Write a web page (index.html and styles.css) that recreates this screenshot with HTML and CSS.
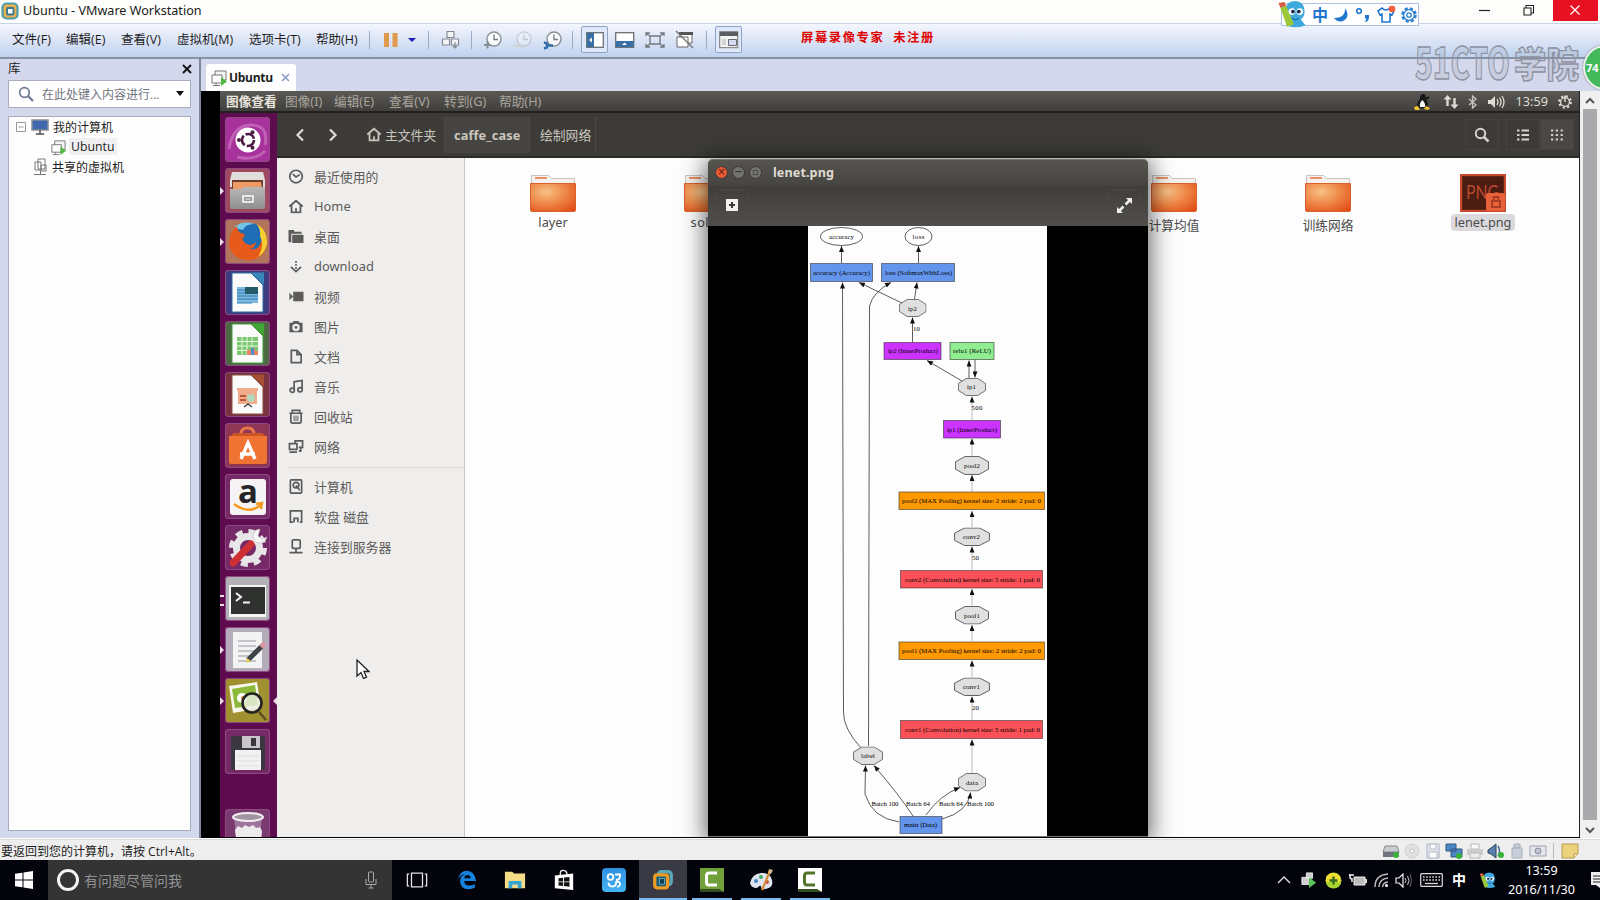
FILE: index.html
```html
<!DOCTYPE html>
<html lang="zh-CN">
<head>
<meta charset="utf-8">
<title>Ubuntu - VMware Workstation</title>
<link rel="stylesheet" href="styles.css">
</head>
<body>
<svg class="defs" width="0" height="0">
  <defs>
    <radialGradient id="folderfill" cx=".35" cy=".3" r=".9"><stop offset="0" stop-color="#f6c184"/><stop offset=".5" stop-color="#ee8445"/><stop offset="1" stop-color="#e04a14"/></radialGradient>
    <linearGradient id="grey" x1="0" y1="0" x2="0" y2="1"><stop offset="0" stop-color="#b9b7b5"/><stop offset="1" stop-color="#8f8f8f"/></linearGradient>
    <linearGradient id="blue" x1="0" y1="0" x2="0" y2="1"><stop offset="0" stop-color="#2f8fe0"/><stop offset="1" stop-color="#45b4f4"/></linearGradient>
    <marker id="ah" viewBox="0 0 6 5" refX="6" refY="2.5" markerWidth="6.5" markerHeight="5" markerUnits="userSpaceOnUse" orient="auto"><path d="M0 0L6 2.5L0 5z" fill="#111"/></marker>
  </defs>
  <symbol id="folder" viewBox="0 0 46 38"><path d="M1.500 10V1.500h17l3 3h23V10z" fill="#f4f1ef" stroke="#c9c2bd"/><path d="M5 4h12" stroke="#e8793f" stroke-width="1.600"/><path d="M.5 9.500h45V36q0 1.500-1.500 1.500H2Q.5 37.500.5 36z" fill="url(#folderfill)" stroke="#d9622c"/></symbol>
  <symbol id="vm" viewBox="0 0 18 18"><path d="M5 2h11v9H5z" fill="#f4f4f4" stroke="#777"/><path d="M2 6h10v8H2z" fill="#fff" stroke="#777"/><path d="M3 16.500h7M6 14v2" stroke="#777"/><path d="M11 8l6 4.500-6 4.500z" fill="#4fba3f"/></symbol>
  <symbol id="clock" viewBox="0 0 20 20"><circle cx="11" cy="9" r="7" fill="#fafbfc" stroke="#8b9095" stroke-width="1.400"/><path d="M11 4.500V9.500h4" fill="none" stroke="#74797e" stroke-width="1.300"/></symbol>
  <symbol id="oct" viewBox="0 0 34 18" preserveAspectRatio="none"><path d="M10 .5h14l9.500 5v7l-9.500 5H10l-9.500-5v-7z" fill="#e0e0e0" stroke="#444" stroke-width=".8"/></symbol>
  <symbol id="house" viewBox="0 0 18 16"><path d="M1.500 8L9 1.500 16.500 8M4 7v7.500h10V7M9 14v-4" fill="none" stroke="currentColor" stroke-width="2"/></symbol>
  <symbol id="vmware" viewBox="0 0 24 24"><rect x="7" y="3" width="14" height="14" rx="3" fill="none" stroke="#5ba9b8" stroke-width="3.600"/><rect x="3" y="6.500" width="14" height="14" rx="2.500" fill="#165d79" stroke="#ec9b25" stroke-width="3.600"/><rect x="8" y="10.500" width="5.500" height="6" fill="#123f55" stroke="#7cc0c4" stroke-width=".8"/></symbol>
  <symbol id="camtasia" viewBox="0 0 24 24"><path d="M17 5H9Q6.500 5 6.500 8v6q0 3 2.500 3h8" fill="none" stroke="currentColor" stroke-width="3"/></symbol>
  <symbol id="mascot" viewBox="0 0 30 30"><path d="M8 12Q8 1 18 1t10 11q0 6-4 8l5 6q-9 4-18 1z" fill="#3ea9dd"/><path d="M3 8l6-2 8 19-7 3z" fill="#9bc83a"/><path d="M1 3l6-1 2 4-6 2z" fill="#d85b40"/><circle cx="15" cy="12" r="3.500" fill="#fff"/><circle cx="23" cy="12" r="3.500" fill="#fff"/><circle cx="16" cy="12" r="2" fill="#152b4e"/><circle cx="22" cy="12" r="2" fill="#152b4e"/><path d="M15 19q4 3 7 0" stroke="#0f558a" fill="none"/></symbol>
</svg>

<header class="titlebar">
  <svg class="app-icon" width="18" height="18" viewBox="0 0 18 18"><rect x="1.500" y="1.500" width="15" height="15" rx="4" fill="#eab04e" stroke="#4d9dab" stroke-width="2.200"/><rect x="6" y="6" width="6.500" height="6.500" rx="1" fill="#fff" stroke="#36758c" stroke-width="1.800"/></svg>
  <span class="title">Ubuntu - VMware Workstation</span>
  <div class="ime">
    <svg class="ime-pet" width="30" height="29"><use href="#mascot"/></svg>
    <b>中</b>
    <svg width="18" height="18" viewBox="0 0 18 18"><path d="M13 2q1 10-11 10 4 5 9 3 8-4 2-13z" fill="#1f77cf"/></svg>
    <svg width="18" height="18" viewBox="0 0 18 18"><circle cx="5" cy="5" r="2.300" fill="none" stroke="#1f77cf" stroke-width="1.600"/><path d="M11 9h4v3q-1 4-4 4l1.500-3.500H11z" fill="#1f77cf"/></svg>
    <svg width="20" height="20" viewBox="0 0 20 20"><path d="M6 3q4 4 8 0l4 3-2 4-2-1v8H6V9l-2 1-2-4z" fill="#fff" stroke="#1f77cf" stroke-width="1.600"/><circle cx="16" cy="4" r="3.300" fill="#f0603c"/></svg>
    <svg width="18" height="18" viewBox="0 0 18 18"><circle cx="9" cy="9" r="6.500" fill="none" stroke="#2d82d2" stroke-width="2.600" stroke-dasharray="3.100 2"/><circle cx="9" cy="9" r="5.300" fill="#fff" stroke="#2d82d2" stroke-width="1.300"/><circle cx="9" cy="9" r="2.200" fill="none" stroke="#2d82d2" stroke-width="1.300"/></svg>
  </div>
  <div class="win-btns">
    <svg width="45" height="21" viewBox="0 0 45 21"><path d="M16 10.500h11" stroke="#222" stroke-width="1.200"/></svg>
    <svg width="45" height="21" viewBox="0 0 45 21"><path d="M16 8h7v7h-7zM18 8V5.500h7.500V13H23" fill="none" stroke="#222" stroke-width="1.100"/></svg>
    <svg class="close" width="45" height="21" viewBox="0 0 45 21"><path d="M17.500 5.500l9 9m0-9l-9 9" stroke="#fff" stroke-width="1.200"/></svg>
  </div>
</header>

<nav class="menubar">
  <span class="w54">文件(F)</span><span class="w55">编辑(E)</span><span class="w56">查看(V)</span><span class="w72">虚拟机(M)</span><span class="w67">选项卡(T)</span><span class="w53">帮助(H)</span>
  <i class="sep"></i>
  <svg class="t-pause" width="36" height="20" viewBox="0 0 36 20"><path d="M0 3h5v14H0zM8.500 3h5v14h-5z" fill="#e09a4c"/><path d="M24 8h8l-4 4z" fill="#1b1bb0"/></svg>
  <i class="sep"></i>
  <svg class="t-net" width="20" height="20" viewBox="0 0 20 20"><g fill="#f5f6f8" stroke="#868a90" stroke-width="1.200"><path d="M6 1.500h7v6H6zM1.500 9h7v6h-7zM10.500 9h7v6h-7z"/><path d="M14 12v6m-2-2l2 2 2-2" fill="none"/></g></svg>
  <i class="sep"></i>
  <div class="clocks">
    <svg width="20" height="20" viewBox="0 0 20 20"><use href="#clock"/><path d="M1 15h7M4.500 11.500v7" stroke="#84909a" stroke-width="2"/></svg>
    <svg class="faded" width="20" height="20" viewBox="0 0 20 20"><use href="#clock"/><path d="M1 16h8" stroke="#d6b080" stroke-width="2"/></svg>
    <svg width="20" height="20" viewBox="0 0 20 20"><use href="#clock"/><path d="M3 15.500h7M1 12.500l3 1v4l-3 1" stroke="#2f6ca8" stroke-width="2.400" fill="none"/></svg>
  </div>
  <i class="sep"></i>
  <div class="views">
    <span class="boxed"><svg width="18" height="16" viewBox="0 0 18 16"><rect x=".7" y=".7" width="16.600" height="14.600" fill="#fff" stroke="#6a6e74" stroke-width="1.300"/><path d="M1 1h7v14H1z" fill="#3a6fa5"/><path d="M6 5.500v5L3 8z" fill="#fff"/></svg></span>
    <svg width="20" height="16" viewBox="0 0 20 16"><rect x=".7" y=".7" width="18" height="14.600" fill="#fff" stroke="#6a6e74" stroke-width="1.300"/><path d="M1 9h17.500v6H1z" fill="#3a6fa5"/><path d="M7 13h5L9.500 10.500z" fill="#fff"/></svg>
    <svg width="20" height="18" viewBox="0 0 20 18"><path d="M5 5h10v8H5zM1 5V2h4M19 5V2h-4M1 13v3h4M19 13v3h-4M1.500 2.500L5 5M18.500 2.500L15 5M1.500 15.500L5 13M18.500 15.500L15 13" fill="none" stroke="#73777d" stroke-width="1.400"/></svg>
    <svg width="20" height="20" viewBox="0 0 20 20"><path d="M5 3h12v10H5z" fill="#fff" stroke="#666"/><path d="M4 2h14v3H4z" fill="#555"/><path d="M2 7h11v10H2z" fill="#fff" stroke="#666"/><path d="M1 1l17 17" stroke="#777" stroke-width="1.500"/></svg>
  </div>
  <i class="sep"></i>
  <span class="boxed last"><svg width="20" height="18" viewBox="0 0 20 18"><rect x=".7" y=".7" width="18" height="16" fill="#f2f2f2" stroke="#777"/><path d="M1 1h18v4H1z" fill="#5a5d62"/><path d="M3 8h4v6H3z" fill="#cfd3d8"/><path d="M9.500 8.500h8v6h-8z" fill="#d5daf0" stroke="#667"/></svg></span>
  <span class="redtext">屏幕录像专家&nbsp; 未注册</span>
</nav>

<main class="work">
  <aside class="library">
    <div class="lib-head"><span>库</span><svg width="10" height="10" viewBox="0 0 10 10"><path d="M1 1l8 8m0-8L1 9" stroke="#111" stroke-width="1.800"/></svg></div>
    <div class="lib-search">
      <svg width="16" height="16" viewBox="0 0 16 16"><circle cx="6.500" cy="6.500" r="4.800" fill="none" stroke="#6c7896" stroke-width="1.700"/><path d="M10 10l5 5" stroke="#6c7896" stroke-width="2.200"/></svg>
      <span>在此处键入内容进行...</span>
      <svg class="dd" width="8" height="5" viewBox="0 0 8 5"><path d="M0 0h8L4 5z" fill="#111"/></svg>
    </div>
    <div class="tree">
      <div class="row r1"><svg width="10" height="10" viewBox="0 0 10 10"><path d="M.5.5h9v9h-9zM2.500 5h5" fill="#fff" stroke="#999"/></svg><svg class="pc" width="18" height="16" viewBox="0 0 18 16"><path d="M1 1h16v10H1z" fill="#3d68ae" stroke="#8a8d92" stroke-width="1.500"/><path d="M9 11v3M5 15h8" stroke="#777" stroke-width="2"/></svg><span>我的计算机</span></div>
      <div class="row r2"><svg width="17" height="17"><use href="#vm"/></svg><span class="sel">Ubuntu</span></div>
      <div class="row r3"><svg width="15" height="18" viewBox="0 0 15 18"><path d="M5 1h7v10H5zM2 4h6v8H2zM8 7h5v6H8z" fill="#fff" stroke="#777"/><path d="M7.500 13v3M1 16.500h12" stroke="#777"/></svg><span>共享的虚拟机</span></div>
    </div>
  </aside>

  <section class="console">
    <div class="tabs"><div class="tab"><svg width="18" height="18"><use href="#vm"/></svg><b>Ubuntu</b><svg class="tx" width="9" height="9" viewBox="0 0 9 9"><path d="M1 1l7 7m0-7L1 8" stroke="#8aa0cc" stroke-width="1.700"/></svg></div></div>
    <div class="screen">
      <div class="guest">
        <div class="panel">
          <b class="p1">图像查看</b><span class="p2">图像(I)</span><span class="p3">编辑(E)</span><span class="p3">查看(V)</span><span class="p3">转到(G)</span><span>帮助(H)</span>
          <div class="indicators">
            <svg width="18" height="18" viewBox="0 0 18 18"><path d="M5 15Q3 10 7 6q0-5 3-5t3 5q3 4 1 9z" fill="#151515"/><path d="M7 14q-1-4 2.500-7Q13 11 12 14z" fill="#f4f4f4"/><path d="M1 14l4-1 2 4H2zM11 16l2-3 4 2-2 2z" fill="#f2c32f"/><path d="M13 6l3-2" stroke="#111" stroke-width="2"/></svg>
            <svg width="16" height="16" viewBox="0 0 16 16"><path d="M4.500 12V3M11.500 4v9" stroke="#dfdbd2" stroke-width="2.400"/><path d="M.5 5.500l4-4.500 4 4.500zM7.500 10.500l4 4.500 4-4.500z" fill="#dfdbd2"/></svg>
            <svg width="10" height="14" viewBox="0 0 10 14"><path d="M1 4l7 6-3.500 3V1L8 4l-7 6" fill="none" stroke="#c9c6be" stroke-width="1.300"/></svg>
            <svg width="18" height="14" viewBox="0 0 18 14"><path d="M1 5h3l4-4v12L4 9H1z" fill="#dfdbd2"/><path d="M10 4q2 3 0 6M12.500 2.500q3 4.500 0 9M15 1q4 6 0 12" fill="none" stroke="#dfdbd2" stroke-width="1.300"/></svg>
            <span>13:59</span>
            <svg width="14" height="14" viewBox="0 0 14 14"><circle cx="7" cy="7" r="5.600" fill="none" stroke="#dfdbd2" stroke-width="2.600" stroke-dasharray="2 2.400"/><circle cx="7" cy="7" r="4.400" fill="#4a4845" stroke="#dfdbd2" stroke-width="1.300"/><path d="M7 .5V7" stroke="#dfdbd2" stroke-width="1.500"/></svg>
          </div>
        </div>
        <div class="desk">
          <div class="launcher">
            <div class="tile dash"><svg viewBox="0 0 45 45"><path d="M4 32Q8 8 26 8T40 28M12 40Q30 44 40 34" fill="none" stroke="#d98fcf" stroke-width="3" opacity=".5"/><circle cx="23" cy="23" r="12.500" fill="#fff"/><circle cx="23" cy="23" r="6" fill="none" stroke="#4d1b45" stroke-width="2.600" stroke-dasharray="10.500 2"/><g fill="#4d1b45"><circle cx="14" cy="23" r="2"/><circle cx="27.500" cy="15.300" r="2"/><circle cx="27.500" cy="30.700" r="2"/></g></svg></div>
            <div class="tile files run"><svg viewBox="0 0 45 45"><path d="M7 4h31l2 8v7H5v-7z" fill="#e0dedb"/><path d="M7 12h31v9H7z" fill="#6d3b2b"/><path d="M8 14h28l1 7H8z" fill="#ee9b68"/><path d="M5 21h11l3-2h21v20q0 2-2 2H7q-2 0-2-2z" fill="url(#grey)"/><rect x="18" y="28" width="10" height="6" fill="#999" stroke="#fff" stroke-width="1.500"/><path d="M20.500 31h5" stroke="#eee"/></svg></div>
            <div class="tile fox run"><svg viewBox="0 0 45 45"><circle cx="24" cy="22" r="18" fill="#1e6db5"/><path d="M9 8q10-7 20-3-9 0-11 6-6-1-9-3z" fill="#74c4e6"/><path d="M5 18Q7 10 12 7q0 5 4 7 3 0 4 3-4 2-1 6 6 6 12 0-1 6-6 7 8 2 11-7 4-8-4-18Q43 12 42 25q-3 16-19 16Q6 40 4 25q0-4 1-7z" fill="#e65a1c"/><path d="M32 5q11 7 10 20-2 9-9 13 7-11 2-21 1-6-3-12z" fill="#f6cf32"/></svg></div>
            <div class="tile writer"><svg viewBox="0 0 45 45"><path d="M7 3h19l12 12v27H7z" fill="#fbfbfb" stroke="#2d6ea4"/><path d="M26 2.500h13V15z" fill="#3787bd"/><path d="M12 17h21v16H12z" fill="#7fb9df"/><path d="M12 20h8m-8 3h8m-8 3h21m-21 3h21m-21 4h15" stroke="#287ab0"/><path d="M20 17h13v7H20z" fill="#245b69"/></svg></div>
            <div class="tile calc"><svg viewBox="0 0 45 45"><path d="M7 3h19l12 12v27H7z" fill="#fbfbfb" stroke="#439b3c"/><path d="M26 2.500h13V15z" fill="#3fa834"/><path d="M12 16h21v18H12z" fill="#7cc870"/><path d="M12 20.500h21m-21 4.500h21m-21 4.500h12M17 16v18m5-18v18m5-18v10" stroke="#e6f8e0"/><path d="M22 34v-5h4v5zM27 34v-7h3v7zM30 34v-4h3v4z" fill="#ee8160"/><path d="M26 27h3v7h-3z" fill="#4a8ecb"/></svg></div>
            <div class="tile impress"><svg viewBox="0 0 45 45"><path d="M7 3h19l12 12v27H7z" fill="#fbfbfb" stroke="#8b4c40"/><path d="M26 2.500h13V15z" fill="#a44f33"/><path d="M12 16h21v3H12zM13 19h19v13H13z" fill="#efab8c"/><path d="M15 24h6m-6 4h6" stroke="#b8583b" stroke-width="2"/><circle cx="26" cy="26" r="4" fill="#b3d8bd"/><path d="M19 35l4-3 4 3" stroke="#444" stroke-width="1.500" fill="none"/></svg></div>
            <div class="tile soft"><svg viewBox="0 0 45 45"><path d="M16 11Q16 5 22.500 5T29 11" stroke="#e8784c" stroke-width="3" fill="none"/><path d="M4 14l5-4h28l5 4z" fill="#ce5426"/><path d="M4 13h38v26q0 2-2 2H6q-2 0-2-2z" fill="#ef7434"/><path d="M16 36l7-16 7 16M15 31h15" stroke="#fff" stroke-width="3.400" fill="none"/></svg></div>
            <div class="tile amazon"><svg viewBox="0 0 45 45"><rect x="5" y="5" width="36" height="36" rx="3" fill="#f6f3f5"/><text x="23" y="29" text-anchor="middle">a</text><path d="M9 30q14 11 27 1M31 30l6-1-1 6" fill="none" stroke="#f49a1d" stroke-width="2.400"/></svg></div>
            <div class="tile prefs"><svg viewBox="0 0 45 45"><circle cx="23" cy="23" r="16.500" fill="none" stroke="#e5e3e5" stroke-width="5" stroke-dasharray="7 5.960"/><circle cx="23" cy="23" r="11.500" fill="none" stroke="#e8e6e8" stroke-width="7"/><path d="M26 19l5-5" stroke="#f1f1f1" stroke-width="5"/><path d="M35 4q-7 1-7 7t6 7q6 0 8-6l-5 2-4-3z" fill="#f6f6f6" stroke="#bbb" stroke-width=".6"/><path d="M8 38l18-19" stroke="#cf2f32" stroke-width="7" stroke-linecap="round"/></svg></div>
            <div class="tile term run2"><svg viewBox="0 0 45 45"><rect x="4" y="9" width="37" height="32" fill="#f4f4f4"/><rect x="6" y="11" width="34" height="27" fill="#303230"/><path d="M11 17l5 4-5 4M18 26.500h7" stroke="#f2f2f2" stroke-width="2" fill="none"/></svg></div>
            <div class="tile gedit run"><svg viewBox="0 0 45 45"><path d="M8 5h29v36H8z" fill="#f3f3f4"/><path d="M13 14h18m-18 5h18m-18 5h18m-18 5h12m-12 5h18" stroke="#b5b7ba" stroke-width="1.500"/><path d="M23 33l14-14" stroke="#3e4348" stroke-width="5"/><path d="M36 20l4-4" stroke="#d795a0" stroke-width="5"/><path d="M21 36l1-5 4 3z" fill="#e9ce52"/></svg></div>
            <div class="tile eog run active"><svg viewBox="0 0 45 45"><path d="M4 8l28-4 4 26-28 5z" fill="#f7f6ec"/><path d="M7 11l23-4 3 20-23 3z" fill="#8dba3a"/><circle cx="17" cy="20" r="5" fill="#fff"/><circle cx="18" cy="20" r="2" fill="#e88923"/><circle cx="27" cy="25" r="9.500" fill="#ecefe3" fill-opacity=".8" stroke="#222" stroke-width="2.600"/><path d="M34 34l7 8" stroke="#5d4d20" stroke-width="2.600"/></svg></div>
            <div class="tile floppy"><svg viewBox="0 0 45 45"><path d="M6 7h32q2 0 2 2v32H6z" fill="#3b3741"/><path d="M17 7h18v12H17z" fill="#c9c6cb"/><path d="M26 9h5v8h-5z" fill="#39363d"/><path d="M10 21h26v20H10z" fill="#f2f2f2"/><path d="M12 27h22m-22 5h22m-22 5h22" stroke="#ddd"/></svg></div>
            <div class="tile bin"><svg viewBox="0 0 45 45"><path d="M9 8h28l-4 37H13z" fill="#b79bb5" opacity=".6"/><ellipse cx="23" cy="8" rx="15" ry="4" fill="#a394a4" stroke="#f1edf1" stroke-width="2"/><path d="M10 21l3-4 4 2 3-3 4 2 4-2 3 3 4-1 2 4-2 23H13z" fill="#eceaed"/></svg></div>
          </div>
          <div class="nautilus">
            <div class="tool">
              <div class="nav2"><svg width="10" height="14" viewBox="0 0 10 14"><path d="M8 1.500L2.500 7 8 12.500" fill="none" stroke="#dedad2" stroke-width="2.200"/></svg><svg width="10" height="14" viewBox="0 0 10 14"><path d="M2 1.500L7.500 7 2 12.500" fill="none" stroke="#dedad2" stroke-width="2.200"/></svg></div>
              <div class="crumb c1"><svg width="16" height="15"><use href="#house"/></svg><span>主文件夹</span></div>
              <div class="crumb c2">caffe_case</div>
              <div class="crumb c3">绘制网络</div>
              <div class="tool-r">
                <span class="tb sb"><svg width="16" height="16" viewBox="0 0 16 16"><circle cx="6.500" cy="6.500" r="4.700" fill="none" stroke="#d6d2cb" stroke-width="2"/><path d="M10 10l4.500 4.500" stroke="#d6d2cb" stroke-width="2.500"/></svg></span>
                <span class="tb"><svg width="12" height="12" viewBox="0 0 12 12"><path d="M0 1.500h2.500m2 0H12M0 6h2.500m2 0H12M0 10.500h2.500m2 0H12" stroke="#d6d2cb" stroke-width="2"/></svg></span>
                <span class="tb on"><svg width="12" height="12" viewBox="0 0 12 12"><path d="M0 1.500h12M0 6h12M0 10.500h12" stroke="#d6d2cb" stroke-width="2" stroke-dasharray="2.200 2.600"/></svg></span>
              </div>
            </div>
            <div class="body">
              <ul class="places">
                <li><svg viewBox="0 0 16 16"><circle cx="8" cy="8" r="6.700"/><path d="M4.500 5.500L8 8.500 12 6"/></svg>最近使用的</li>
                <li><svg viewBox="0 0 18 16"><use href="#house"/></svg>Home</li>
                <li><svg viewBox="0 0 16 16"><path class="f" d="M0 1h6v2h8v2H3v9H0zM4 6h12v9H4z"/></svg>桌面</li>
                <li><svg viewBox="0 0 16 16"><path d="M8 2v10" stroke-dasharray="2 1.300"/><path d="M2.500 8.500L8 13.500l5.500-5"/></svg>download</li>
                <li><svg viewBox="0 0 16 16"><path class="f" d="M5 3h11v10H5zM1 4l4 4-4 4z"/></svg>视频</li>
                <li><svg viewBox="0 0 16 16"><path class="f" fill-rule="evenodd" d="M1 4h3l1.500-2h5L12 4h3v10H1zM8 5a4 4 0 100 8 4 4 0 000-8zm0 2.500a1.500 1.500 0 110 3 1.500 1.500 0 010-3z"/></svg>图片</li>
                <li><svg viewBox="0 0 16 16"><path d="M3 1.500h6l4.500 4.500v8.500H3zM9 2v4h4"/></svg>文档</li>
                <li><svg viewBox="0 0 16 16"><path d="M6 12V3l8.500-1.500V11"/><circle cx="4" cy="12" r="2.300"/><circle cx="12.300" cy="11.500" r="2.300"/></svg>音乐</li>
                <li><svg viewBox="0 0 16 16"><path d="M1 4.500h14M4 4V1.500h8V4M2.500 5v8q0 2 2 2h7q2 0 2-2V5"/><path d="M6 7v6m4-6v6M8 7v6" stroke-width="1"/></svg>回收站</li>
                <li><svg viewBox="0 0 16 16"><path d="M7 4V2h8v7h-4M1 5h8v6H1zM1 14h8M13 9v4h-2"/></svg>网络</li>
                <li class="first2"><svg viewBox="0 0 16 16"><rect x="2" y="1" width="12" height="14" rx="1"/><circle cx="8" cy="6.500" r="3"/><path d="M8 7l4 5"/></svg>计算机</li>
                <li><svg viewBox="0 0 16 16"><path d="M5 14H2V2h12v12h-2M6 14v-4h4v4"/></svg>软盘 磁盘</li>
                <li><svg viewBox="0 0 16 16"><rect x="4" y="1" width="8.500" height="9" rx="1"/><path d="M8 10v4M1 14.500h14"/></svg>连接到服务器</li>
              </ul>
              <div class="files-grid">
                <figure><svg width="46" height="38"><use href="#folder"/></svg><figcaption>layer</figcaption></figure>
                <figure><svg width="46" height="38"><use href="#folder"/></svg><figcaption class="wide-l">solver</figcaption></figure>
                <figure class="gap"><svg width="46" height="38"><use href="#folder"/></svg><figcaption class="cn">计算均值</figcaption></figure>
                <figure><svg width="46" height="38"><use href="#folder"/></svg><figcaption class="cn">训练网络</figcaption></figure>
                <figure class="png"><svg width="46" height="38" viewBox="0 0 46 38"><rect x="1" y="1" width="44" height="36" fill="#4b1d12" stroke="#c64a2b" stroke-width="2.400"/><text class="pngt" x="6" y="25" textLength="33" lengthAdjust="spacingAndGlyphs">PNG</text><rect x="26" y="19" width="19" height="18" rx="2" fill="#e8603c"/><path d="M32 27h8v6h-8zM33.500 27v-4h5v4" fill="none" stroke="#a93e20" stroke-width="1.800"/></svg><figcaption class="picked">lenet.png</figcaption></figure>
              </div>
            </div>
          </div>
        </div>

        <div class="viewer">
          <div class="v-title"><i class="wb x">×</i><i class="wb">−</i><i class="wb">▫</i><b>lenet.png</b></div>
          <div class="v-tool">
            <span><svg width="12" height="12" viewBox="0 0 12 12"><rect width="12" height="12" fill="#f2f1ee"/><path d="M6 3v6M3 6h6" stroke="#3b3a37" stroke-width="2"/></svg></span>
            <span><svg width="15" height="15" viewBox="0 0 15 15"><path d="M9 0h6v6zM6 15H0V9z" fill="#f0eeea"/><path d="M8.500 6.500l4-4M6.500 8.500l-4 4" stroke="#f0eeea" stroke-width="2.500"/></svg></span>
          </div>
          <div class="v-canvas">
            <svg class="net" width="239" height="610" viewBox="808 226 239 610">
              <rect x="808" y="226" width="239" height="610" fill="#fdfdfd"/>
              <g fill="none" stroke="#333" stroke-width=".8" marker-end="url(#ah)">
                <path d="M841.500 263V246"/><path d="M918.500 263V246"/>
                <path d="M861 748Q843 728 843.500 712L842.500 282.500"/>
                <path d="M868.500 746L869.500 306Q873 292 891 282.500"/>
                <path d="M902 303L859 282.500"/><path d="M914.500 299L917 282.500"/>
                <path d="M912.500 342V317.500"/><path d="M962 381L927 360.500"/>
                <path d="M969 378V360.500"/><path d="M975 360V377.500"/>
                <g stroke="#aaa"><path d="M972 420V396.500"/><path d="M972 456V438.500"/><path d="M972 492V475"/><path d="M972 527V511"/><path d="M972 570V546.500"/><path d="M972 606V589"/><path d="M972 641V625"/><path d="M972 677V660.500"/><path d="M972 720V696.500"/><path d="M972 773V739.500"/></g>
                <path d="M899 822Q872 818 865 794L865.500 765.500"/>
                <path d="M913 816Q900 796 874 765.500"/>
                <path d="M926 815Q940 795 960 787.500"/>
                <path d="M942 819Q968 812 970.500 792.500"/>
              </g>
              <g fill="#fff" stroke="#333" stroke-width=".8"><ellipse cx="841.500" cy="236.500" rx="21" ry="9"/><ellipse cx="918.500" cy="236.500" rx="13.500" ry="9"/></g>
              <g stroke="#333" stroke-opacity=".65" stroke-width=".9">
                <g fill="#6495ed"><rect x="810.500" y="263.500" width="62" height="18"/><rect x="881.500" y="263.500" width="73" height="18"/><rect x="900" y="816.500" width="42" height="17"/></g>
                <g fill="#cc33ff"><rect x="884" y="342.500" width="57" height="17"/><rect x="943.500" y="420.500" width="57" height="17.500"/></g>
                <rect x="950" y="342.500" width="44" height="17" fill="#90ee90"/>
                <g fill="#ff9900"><rect x="899" y="492" width="145.500" height="17.500"/><rect x="899" y="642" width="145.500" height="17.500"/></g>
                <g fill="#fb5058"><rect x="900.500" y="570.500" width="142" height="17.500"/><rect x="900.500" y="720.500" width="142" height="18"/></g>
              </g>
              <use href="#oct" x="899" y="299" width="27.500" height="18"/><use href="#oct" x="958" y="378" width="28" height="18"/><use href="#oct" x="955" y="456" width="34" height="19"/><use href="#oct" x="954" y="527.500" width="36" height="18.500"/><use href="#oct" x="955" y="606" width="34" height="18.500"/><use href="#oct" x="954" y="677.500" width="36" height="18.500"/><use href="#oct" x="853" y="746.500" width="30" height="18.500"/><use href="#oct" x="958" y="773" width="28" height="18.500"/>
              <g class="nt">
                <text x="829" y="238.500" textLength="25">accuracy</text><text x="912.500" y="238.500" textLength="12">loss</text>
                <text x="813" y="274.500" textLength="57">accuracy (Accuracy)</text><text x="885" y="274.500" textLength="67" lengthAdjust="spacingAndGlyphs">loss (SoftmaxWithLoss)</text>
                <text x="908" y="310.500" textLength="9">ip2</text><text x="913" y="331" textLength="7">10</text>
                <text x="888" y="353" textLength="50">ip2 (InnerProduct)</text><text x="953" y="353" textLength="38">relu1 (ReLU)</text>
                <text x="967" y="389" textLength="9">ip1</text><text x="971.500" y="409.500" textLength="11">500</text>
                <text x="947" y="431.500" textLength="50">ip1 (InnerProduct)</text><text x="964" y="467.500" textLength="16">pool2</text>
                <text x="902" y="503" textLength="139">pool2 (MAX Pooling) kernel size: 2 stride: 2 pad: 0</text><text x="963" y="539" textLength="17">conv2</text><text x="972" y="560" textLength="7">50</text>
                <text x="905" y="581.500" textLength="135">conv2 (Convolution) kernel size: 5 stride: 1 pad: 0</text><text x="964" y="617.500" textLength="16">pool1</text>
                <text x="902" y="653" textLength="139">pool1 (MAX Pooling) kernel size: 2 stride: 2 pad: 0</text><text x="963" y="689" textLength="17">conv1</text><text x="972" y="710" textLength="7">20</text>
                <text x="905" y="731.500" textLength="135">conv1 (Convolution) kernel size: 5 stride: 1 pad: 0</text><text x="861" y="758" textLength="14">label</text><text x="966" y="784.500" textLength="12">data</text>
                <text x="871.500" y="806" textLength="27">Batch 100</text><text x="906" y="806" textLength="24">Batch 64</text><text x="939" y="806" textLength="24">Batch 64</text><text x="967" y="806" textLength="27">Batch 100</text><text x="904" y="827" textLength="33">mnist (Data)</text>
              </g>
            </svg>
          </div>
        </div>
        <svg class="cursor" width="14" height="21" viewBox="0 0 14 21"><path d="M1 1v16l4-3.500 2.500 6 3-1.300L8 12.500h5z" fill="#fff" stroke="#222" stroke-width="1.300"/></svg>
      </div>
      <div class="vscroll"><svg width="10" height="7" viewBox="0 0 10 7"><path d="M1 6l4-4 4 4" fill="none" stroke="#555" stroke-width="2"/></svg><i></i><svg width="10" height="7" viewBox="0 0 10 7"><path d="M1 1l4 4 4-4" fill="none" stroke="#555" stroke-width="2"/></svg></div>
    </div>
  </section>
</main>

<footer class="status"><span>要返回到您的计算机，请按 Ctrl+Alt。</span>
  <div class="devs">
    <svg viewBox="0 0 18 16"><path d="M3 3h12l2 6H1z" fill="#c9ccd2" stroke="#888"/><path d="M1 9h16v5H1z" fill="#6d737c"/><circle cx="14" cy="12" r="3" fill="#37b138"/></svg>
    <svg viewBox="0 0 18 16"><circle cx="9" cy="8" r="7" fill="#ddd" stroke="#ccc"/><circle cx="9" cy="8" r="2" fill="#fff" stroke="#bbb"/></svg>
    <svg viewBox="0 0 18 16"><path d="M3 1h12v14H3z" fill="#dfe5ee" stroke="#9aa6ba"/><path d="M6 1h6v5H6zM5 9h8v6H5z" fill="#fff" stroke="#a7b2c3"/></svg>
    <svg viewBox="0 0 18 16"><path d="M1 1h10v7H1zM6 6h11v8H6z" fill="#4b87c6" stroke="#34557d"/><circle cx="14" cy="13" r="3" fill="#37b138"/></svg>
    <svg viewBox="0 0 18 16"><path d="M5 1h8v5H5z" fill="#fff" stroke="#aaa"/><path d="M1 6h16v6H1z" fill="#c4c4c8"/><path d="M4 10h10v5H4z" fill="#eee" stroke="#aaa"/></svg>
    <svg viewBox="0 0 18 16"><path d="M1 7l3-2 5-4v14l-5-4-3-1z" fill="#5580b0" stroke="#345"/><path d="M11 3q3 5 0 10" stroke="#3c6ea3" fill="none" stroke-width="1.500"/><circle cx="14" cy="12" r="3" fill="#37b138"/></svg>
    <svg viewBox="0 0 18 16"><path d="M6 1h6v4H6zM4 5h10v10H4z" fill="#bfc7d4" stroke="#96a0b0"/></svg>
    <svg viewBox="0 0 18 16"><path d="M1 3h16v10H1z" fill="#e5e7ec" stroke="#9da4b0"/><circle cx="9" cy="8" r="3" fill="#c0c6d0" stroke="#889"/></svg>
    <i></i>
    <svg viewBox="0 0 18 16"><path d="M1 1h16v10l-4 4H1z" fill="#ecd27c" stroke="#b49a50"/><path d="M17 11h-4v4" fill="#fff3bf" stroke="#b49a50"/></svg>
  </div>
</footer>

<footer class="taskbar">
  <div class="start"><svg width="18" height="18" viewBox="0 0 18 18"><path d="M0 2.800L7.500 1.700V8.500H0zM8.500 1.500L18 0v8.500H8.500zM0 9.500h7.500v6.800L0 15.200zM8.500 9.500H18V18l-9.500-1.500z" fill="#fff"/></svg></div>
  <div class="cortana"><i></i><span>有问题尽管问我</span><svg width="12" height="18" viewBox="0 0 12 18"><rect x="3.500" y="1" width="5" height="10" rx="1" fill="none" stroke="#aaa"/><path d="M1 8v5.500h10V8M6 13.500V17M3.500 17h5" fill="none" stroke="#aaa"/></svg></div>
  <div class="apps">
    <span><svg viewBox="0 0 24 24"><path d="M3.500 5.500H1.500v13h2M20.500 5.500h2v13h-2M6 4.500h12v15H6z" fill="none" stroke="#e4e4e4" stroke-width="1.400"/></svg></span>
    <span class="edge"><svg viewBox="0 0 24 24"><path d="M2 12Q4 2 12 2t10 11H9q0 5 5.500 5 4 0 6-2v4.500q-4 2-8 1.500-8-1-8-9 0-5 5-7-5 0-7.500 6zM9 10h7q-.5-3.500-3.500-3.500T9 10z" fill="#1583de"/></svg></span>
    <span><svg viewBox="0 0 24 24"><path d="M1 3h8l2 2h12v16H1z" fill="#f5dd87"/><path d="M5 21v-8h14v8h-4v-4H9v4z" fill="#35a6d0"/></svg></span>
    <span><svg viewBox="0 0 24 24"><path d="M8 7V4q0-2.500 3-2.500T15 4v3" fill="none" stroke="#eee" stroke-width="1.500"/><path d="M2 7l20-2v18L2 21z" fill="#fff"/><path d="M6 10l5-.5v4H6zM12 9.400l6-.6v4.700h-6zM6 14.500h5v4L6 18zM12 14.500h6v4.800l-6-.7z" fill="#111"/></svg></span>
    <span class="wide"><svg viewBox="0 0 24 24"><rect width="24" height="24" rx="4" fill="url(#blue)"/><g fill="none" stroke="#fff" stroke-width="1.800"><circle cx="8.500" cy="9" r="2.800"/><path d="M13 6.500h5q.5 5.500-4 5.500M6.500 14.500q0 4 4 4t3.500-4.500q4-1 4 2t-3 2.500"/></g></svg></span>
    <span class="cur"><svg viewBox="0 0 24 24"><use href="#vmware"/></svg></span>
    <span class="open"><svg class="c-white" viewBox="0 0 24 24"><rect width="24" height="24" fill="#6fa03a"/><path d="M0 21h19l5 3H0z" fill="#334f1e"/><use href="#camtasia"/></svg></span>
    <span class="open"><svg viewBox="0 0 24 24"><path d="M1 15Q3 6 12 5t11 7-7 9q-4 1-4-2t-4 1q-6 0-7-5z" fill="#dfe4ee"/><circle cx="7" cy="13" r="2" fill="#3a86c8"/><circle cx="12" cy="9" r="2" fill="#3faa60"/><circle cx="18" cy="14" r="2" fill="#d2503d"/><path d="M13 22L21 3" stroke="#d58a3a" stroke-width="2.200"/><path d="M19 5l1-4 4 1-2 4z" fill="#d9b98c"/></svg></span>
    <span class="open"><svg class="c-green" viewBox="0 0 24 24"><rect width="24" height="24" fill="#fff"/><path d="M0 21h19l5 3H0z" fill="#334f1e"/><use href="#camtasia"/></svg></span>
  </div>
  <div class="tray">
    <svg width="14" height="14" viewBox="0 0 14 14"><path d="M1 10l6-6 6 6" fill="none" stroke="#ddd" stroke-width="1.400"/></svg>
    <svg width="16" height="16" viewBox="0 0 18 18"><path d="M6 1h7v6H6zM1 6h9v8H1z" fill="#ccc" stroke="#eee"/><path d="M9 6l8 6-8 6z" fill="#5ac45a"/></svg>
    <svg width="17" height="17" viewBox="0 0 17 17"><circle cx="8.500" cy="8.500" r="8" fill="#a9d52c"/><path d="M1 5q7-8 14 0v5H1z" fill="#f5dc35"/><path d="M8.500 4.500v8M4.500 8.500h8" stroke="#356b1d" stroke-width="2.400"/></svg>
    <svg width="18" height="14" viewBox="0 0 18 14"><path d="M5 4h11v8H5zM16 6.500h1.500v3H16" fill="#bbb" stroke="#eee"/><path d="M1 1v3q0 2 2 2v3M0 2h5" stroke="#eee" fill="none" stroke-width="1.500"/></svg>
    <svg width="15" height="15" viewBox="0 0 15 15"><g fill="none" stroke="#bbb" stroke-width="1.500"><path d="M1 14Q1 2 14 1M5 14Q5 6 14 5M8.500 14Q9 9.500 14 9"/></g><circle cx="12.500" cy="12.500" r="1.500" fill="#fff"/></svg>
    <svg width="17" height="15" viewBox="0 0 17 15"><path d="M1 5h3l4-4v13L4 10H1z" fill="none" stroke="#eee" stroke-width="1.200"/><path d="M10 5q2 2.500 0 5M12.500 3q3 4.500 0 9" fill="none" stroke="#ccc"/><path d="M15 1q3 6 0 13" fill="none" stroke="#666"/></svg>
    <svg width="23" height="14" viewBox="0 0 23 14"><rect x=".7" y=".7" width="21.600" height="12.600" rx="1" fill="none" stroke="#ddd" stroke-width="1.200"/><path d="M3 4h17M3 7h17" stroke="#ddd" stroke-width="1.400" stroke-dasharray="1.600 1.500"/><path d="M5 10.500h13" stroke="#ddd" stroke-width="1.300"/></svg>
    <b>中</b>
    <svg width="17" height="17"><use href="#mascot"/></svg>
  </div>
  <div class="clock"><span>13:59</span><span>2016/11/30</span></div>
  <svg class="notes" width="9" height="18" viewBox="0 0 9 18"><path d="M0 1h9v16l-4-3H0z" fill="#eee"/><path d="M2 5h7M2 8h7M2 11h7" stroke="#222"/></svg>
</footer>

<svg class="watermark" width="172" height="60" viewBox="0 0 172 60"><text x="4" y="46" textLength="95" lengthAdjust="spacingAndGlyphs" class="wm-l">51CTO</text><text x="103" y="45" textLength="65" lengthAdjust="spacingAndGlyphs" class="wm-c">学院</text></svg>
<div class="badge">74</div>
</body>
</html>
```

FILE: styles.css
```css
* { box-sizing: border-box; }
body { margin: 0; width: 1600px; height: 900px; overflow: hidden; position: relative; display: flex; flex-direction: column; background: #d4d8ec; font: 12px "Open Sans", "Noto Sans CJK SC", sans-serif; color: #1c1c1c; white-space: nowrap; }
svg { display: block; flex: none; }
.defs { position: absolute; }

.titlebar { height: 23px; flex: none; display: flex; align-items: center; background: #fdfefb; }
.app-icon { margin-left: 1px; margin-bottom: 1px; }
.title { margin-left: 4px; font: 12.6px "Noto Sans", sans-serif; flex: 1; padding-bottom: 2px; }
.ime { position: relative; z-index: 2; margin-right: 44px; width: 138px; height: 23px; margin-top: 6px; background: #fff; border: 1px solid #aebfe6; display: flex; align-items: center; gap: 4px; padding-left: 30px; color: #1f77cf; }
.ime b { font-size: 16px; line-height: 20px; width: 16px; }
.ime-pet { position: absolute; left: -5px; top: -4px; }
.win-btns { display: flex; align-self: flex-start; padding-right: 2px; }
.close { background: #e81123; }

.menubar { height: 36px; flex: none; display: flex; align-items: center; padding: 0 0 2px 12px; background: linear-gradient(#f3f6fd, #dbe4f6 50%, #bfd2ee); border-top: 1px solid #c8d3e6; border-bottom: 2px solid #8791a3; font-size: 12.5px; }
.menubar > span { line-height: 30px; }
.w54 { width: 54px; } .w55 { width: 55px; } .w56 { width: 56px; } .w72 { width: 72px; } .w67 { width: 67px; } .w53 { width: 53px; }
.sep { width: 1px; height: 18px; background: #9aa9c4; flex: none; }
.t-pause { margin: 0 8px 0 14px; }
.t-net { margin: 0 10px 0 12px; }
.clocks { display: flex; gap: 10px; margin: 0 9px 0 11px; }
.faded { opacity: .3; }
.views { display: flex; align-items: center; gap: 10px; margin: 0 11px 0 8px; }
.views .boxed { margin-right: -3px; }
.boxed { width: 27px; height: 27px; border: 1px solid #8fa3c8; border-radius: 2px; display: flex; align-items: center; justify-content: center; background: #dfe8f8; }
.last { margin-left: 8px; }
.menubar .redtext { margin-left: 59px; color: #e00000; font: bold 12.3px/20px "Noto Sans CJK SC", sans-serif; margin-top: -6px; letter-spacing: 1.6px; }

.work { height: 779px; flex: none; display: flex; }
.library { width: 201px; padding: 0 8px 7px 8px; display: flex; flex-direction: column; border-right: 2px solid #7e879a; }
.lib-head { height: 21px; display: flex; align-items: center; justify-content: space-between; padding: 0 0 4px 0; font-size: 12.5px; }
.lib-head svg { margin-right: -1px; margin-top: 2px; }
.lib-search { height: 28px; background: #fff; border: 1px solid #a6adbd; display: flex; align-items: center; padding: 0 6px 1px 9px; color: #71747c; font-size: 12px; }
.lib-search span { margin-left: 8px; flex: 1; }
.tree { margin-top: 8px; flex: 1; background: #fdfdfe; border: 1px solid #a6adbd; }
.row { height: 20px; display: flex; align-items: center; }
.row span { margin-top: -1px; }
.r1 { padding-left: 7px; } .r1 .pc { margin: 0 4px 0 5px; }
.r2 { padding-left: 41px; } .r2 span { margin-left: 2px; padding: 0 2px; line-height: 17px; font-size: 12.3px; background: #f1eff2; }
.r3 { padding-left: 24px; } .r3 span { margin-left: 4px; }

.console { flex: 1; display: flex; flex-direction: column; }
.tabs { height: 32px; padding: 5px 0 0 5px; }
.tab { width: 90px; height: 27px; background: #fefefe; border-radius: 3px 3px 0 0; display: flex; align-items: center; padding-left: 4px; }
.tab b { margin-left: 1px; font-size: 12px; letter-spacing: -.3px; } .tx { margin-left: 8px; }
.screen { flex: 1; display: flex; background: #000; padding-left: 19px; min-height: 0; }
.guest { position: relative; width: 1360px; height: 746px; overflow: hidden; display: flex; flex-direction: column; font-family: "Noto Sans", "Noto Sans CJK SC", sans-serif; border-right: 1px solid #222; }
.vscroll { width: 20px; background: #f0f0f0; display: flex; flex-direction: column; align-items: center; padding: 6px 0 4px 0; }
.vscroll i { flex: 1; width: 14px; background: #a9a9ab; margin: 5px 0 7px; }

.panel { height: 22px; flex: none; display: flex; align-items: center; padding-left: 6px; background: linear-gradient(#5a5955, #413f3c); border-bottom: 2px solid #22211f; color: #a8a49c; font-size: 12.7px; line-height: 19px; padding-top: 1px; }
.panel b { color: #e8e4db; }
.p1 { width: 59px; } .p2 { width: 49px; } .p3 { width: 55px; }
.indicators { margin-left: auto; display: flex; align-items: center; padding-right: 7px; color: #dfdbd2; }
.indicators svg { margin-right: 12px; }
.indicators svg:nth-child(2) { margin-right: 9px; }
.indicators svg:nth-child(3) { margin-right: 9px; }
.indicators svg:nth-child(4) { margin-right: 11px; }
.indicators svg:last-child { margin: 0 0 0 10px; }
.desk { flex: 1; display: flex; min-height: 0; }
.launcher { width: 57px; background: #5f0b50; padding: 4px 0 0 5px; display: flex; flex-direction: column; gap: 6px; overflow: hidden; }
.tile { position: relative; width: 45px; height: 45px; flex: none; border-radius: 4px; background: #762967; box-shadow: inset 0 0 0 1px #8d4a80; }
.tile svg { width: 45px; height: 45px; overflow: visible; }
.tile text { font: bold 33px "Open Sans", sans-serif; fill: #262426; }
.dash { background: #a8329b; } .files { background: #a04a62; } .fox { background: #b3745c; } .writer { background: #3d3c80; } .calc { background: #4d6a45; } .impress { background: #79333f; } .soft { background: #8f3556; }
.term { background: #b4b0b8; } .gedit { background: #b5acbb; } .eog { background: #a09030; } .bin { margin-top: 29px; background: #7a3b70; }
.run::before { content: ""; position: absolute; left: -5px; top: 19px; border: 4px solid transparent; border-left-color: #e8dce6; border-right: 0; }
.run2::before { content: ""; position: absolute; left: -5px; top: 19px; width: 4px; height: 7px; border: 2px solid #e8dce6; border-width: 2px 0; }
.active::after { content: ""; position: absolute; right: -7px; top: 19px; border: 4px solid transparent; border-right-color: #e8dce6; border-left: 0; }

.nautilus { flex: 1; display: flex; flex-direction: column; }
.tool { height: 45px; flex: none; background: #3c3b38; border-bottom: 2px solid #2c2b29; display: flex; align-items: center; color: #c9c5bd; font-size: 12.8px; }
.nav2 { display: flex; gap: 23px; margin-left: 18px; width: 64px; }
.crumb { height: 36px; display: flex; align-items: center; border-right: 1px solid #4d4b48; }
.c1 { width: 86px; padding-left: 7px; } .c1 span { margin-left: 3px; } .c2 { width: 85px; padding-left: 9px; background: #464441; font-weight: bold; letter-spacing: .1px; } .c3 { width: 66px; padding-left: 10px; }
.tool-r { margin-left: auto; display: flex; padding-right: 5px; }
.tb { width: 34px; height: 31px; display: flex; align-items: center; justify-content: center; border: 1px solid #454340; }
.sb { margin-right: 7px; } .on { background: #4a4845; }
.body { flex: 1; display: flex; background: #fdfdfd; }
.places { list-style: none; margin: 0; padding: 3px 0 0 11px; width: 188px; background: #efeeed; border-right: 1px solid #c6c5c4; font-size: 12.9px; }
.places li { height: 30px; display: flex; align-items: center; gap: 10px; color: #5c5b5a; }
.places svg { width: 16px; height: 15px; fill: none; stroke: #5c5b5a; stroke-width: 1.800; }
.places .f { fill: #5c5b5a; stroke: none; }
.places .first2 { margin-top: 6px; border-top: 1px solid #dddcdb; height: 34px; padding-top: 4px; }
.files-grid { display: flex; padding: 16px 0 0 11px; }
figure { margin: 0; width: 154px; display: flex; flex-direction: column; align-items: center; color: #4a4a4a; font-size: 12.7px; }
figcaption { line-height: 17px; margin-top: 2px; } .cn { margin-top: 5px; }
.wide-l { padding-left: 6px; letter-spacing: .5px; }
figure.gap { margin-left: 313px; }
figure.png { margin-left: 1px; }
.picked { background: #dcd9dc; border-radius: 4px; padding: 0 4px; }
.pngt { font: 19px "Lato", sans-serif; fill: #b9482d; }

.viewer { position: absolute; left: 488px; top: 68px; width: 440px; height: 678px; background: #000; border-radius: 6px 6px 0 0; box-shadow: 0 3px 22px 4px rgba(0,0,0,.55); display: flex; flex-direction: column; }
.v-title { height: 27px; display: flex; align-items: center; padding: 0 0 2px 7px; gap: 4px; border-radius: 5px 5px 0 0; border-top: 1px solid #77756e; background: linear-gradient(#55544f, #454440); color: #dfdbd2; }
.v-title b { margin-left: 7px; font-size: 12.6px; letter-spacing: .1px; }
.wb { width: 13px; height: 13px; border-radius: 50%; background: #74726d; border: 1px solid #3a3936; color: #3a3936; font: bold 10px/10px "DejaVu Sans", sans-serif; text-align: center; }
.x { background: #ea5b35; color: #7c2812; }
.v-tool { height: 40px; display: flex; justify-content: space-between; padding: 3px 8px; background: linear-gradient(#3f3e3b, #504f4a); }
.v-tool span { width: 32px; height: 32px; border: 1px solid #4a4945; border-radius: 4px; display: flex; align-items: center; justify-content: center; }
.v-canvas { flex: 1; padding-left: 100px; border-bottom: 1px solid #777; overflow: hidden; }
.nt { font: 6.8px "Liberation Serif", serif; fill: #000; }
.cursor { position: absolute; left: 136px; top: 568px; }

.status { height: 22px; flex: none; background: #eeeeee; border-top: 1px solid #fff; box-shadow: inset 0 1px #d9d9d9; display: flex; align-items: center; justify-content: space-between; padding: 3px 21px 0 1px; font-size: 12px; }
.devs { display: flex; align-items: center; gap: 3px; }
.devs svg { width: 18px; height: 16px; }
.devs svg:nth-child(2), .devs svg:nth-child(3), .devs svg:nth-child(5), .devs svg:nth-child(7) { opacity: .8; }
.devs i { width: 1px; height: 16px; background: #b5bac6; margin: 0 4px 0 3px; }

.taskbar { height: 40px; flex: none; display: flex; align-items: center; background: #02030b; color: #fff; }
.start { width: 48px; padding-left: 15px; }
.cortana { width: 344px; height: 40px; background: #343435; display: flex; align-items: center; padding-left: 9px; color: #929292; font-size: 14px; }
.cortana i { width: 22px; height: 22px; border: 3px solid #f4f4f4; border-radius: 50%; }
.cortana span { margin-left: 5px; flex: 1; } .cortana svg { margin-right: 15px; }
.apps { display: flex; width: 442px; }
.apps span { width: 49px; height: 40px; display: flex; align-items: center; justify-content: center; }
.apps svg { width: 22px; height: 22px; }
.apps .edge { padding-left: 2px; }
.apps .wide { width: 51px; } .apps .wide svg, .apps .open svg { width: 24px; height: 24px; }
.apps .cur { width: 48px; background: #393a43; box-shadow: inset 0 -2px #76b9ed; }
.apps .open { background: linear-gradient(#76b9ed, #76b9ed) center bottom / 40px 2px no-repeat; }
.c-white { color: #fff; } .c-green { color: #53742a; }
.tray { margin-left: auto; display: flex; align-items: center; gap: 8px; }
.tray svg:nth-child(1) { margin-right: 2px; }
.tray svg:nth-child(3), .tray svg:nth-child(4) { margin-right: -1px; }
.tray svg:nth-child(5) { margin-right: -2px; }
.tray b { font-size: 14px; line-height: 20px; margin: 0 5px 0 1px; }
.clock { width: 91px; margin-right: 4px; display: flex; flex-direction: column; align-items: center; font: 12.6px/19px "Noto Sans", sans-serif; }

.watermark { position: absolute; left: 1411px; top: 33px; }
.watermark text { fill: rgba(150,155,170,.2); stroke: #8d91a0; stroke-width: 1.300; }
.wm-l { font: 900 43px/1 "Noto Sans CJK SC", sans-serif; }
.wm-c { font: 900 36px/1 "Noto Sans CJK SC", sans-serif; }
.badge { position: absolute; left: 1583px; top: 45px; width: 44px; height: 45px; border-radius: 50%; background: #43b95b; border: 2px solid #e9efe9; box-shadow: 0 0 2px #777; color: #fff; font: bold 11px/41px "Open Sans", sans-serif; padding-left: 1px; }
```
